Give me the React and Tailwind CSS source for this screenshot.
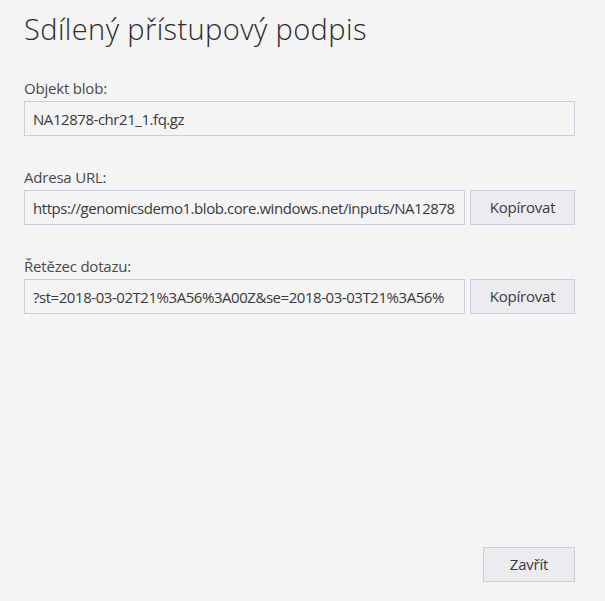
import React from "react";

const font = { fontFamily: '"Open Sans", "Noto Sans", sans-serif' };

function Field({ label, value, button, labelClass }) {
  return (
    <div className={labelClass}>
      <div className="text-[15px] leading-[20px] tracking-[-0.2px] text-[#4a4a4a] mb-[3px]">{label}</div>
      <div className="flex gap-[5px]">
        <div className="flex-1 min-w-0 h-[35px] border border-[#cdcddf] bg-[#f4f4f4] pl-[8px] flex items-center overflow-hidden">
          <span className="text-[15px] leading-[20px] tracking-[-0.45px] text-[#3a3a3a] whitespace-nowrap">{value}</span>
        </div>
        {button && (
          <button className="w-[105px] h-[35px] border border-[#cdcddf] bg-[#ebebf0] text-[15px] tracking-[-0.2px] text-[#3a3a3a] shrink-0">
            {button}
          </button>
        )}
      </div>
    </div>
  );
}

export default function App() {
  return (
    <div style={font} className="w-[605px] h-[601px] bg-[#f4f4f4] pl-[24px] pr-[30px] flex flex-col">
      <h1 className="text-[29px] leading-[36px] font-light tracking-[0.4px] text-[#2b2b2b] mt-[11px]">Sdílený přístupový podpis</h1>
      <Field label="Objekt blob:" value="NA12878-chr21_1.fq.gz" labelClass="mt-[31px]" />
      <Field
        label="Adresa URL:"
        value="https://genomicsdemo1.blob.core.windows.net/inputs/NA12878"
        button="Kopírovat"
        labelClass="mt-[31px]"
      />
      <Field
        label="Řetězec dotazu:"
        value="?st=2018-03-02T21%3A56%3A00Z&se=2018-03-03T21%3A56%"
        button="Kopírovat"
        labelClass="mt-[31px]"
      />
      <div className="flex-1" />
      <div className="flex justify-end mb-[19px]">
        <button className="w-[92px] h-[35px] border border-[#cdcddf] bg-[#ebebf0] text-[15px] tracking-[-0.2px] text-[#3a3a3a]">
          Zavřít
        </button>
      </div>
    </div>
  );
}
